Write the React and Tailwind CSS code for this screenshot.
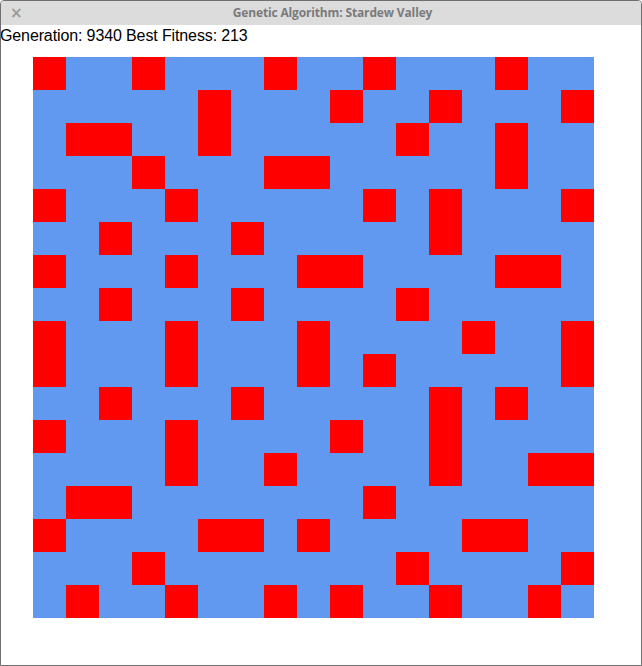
const grid = [
  [0, 3, 7, 10, 14],
  [5, 9, 12, 16],
  [1, 2, 5, 11, 14],
  [3, 7, 8, 14],
  [0, 4, 10, 12, 16],
  [2, 6, 12],
  [0, 4, 8, 9, 14, 15],
  [2, 6, 11],
  [0, 4, 8, 13, 16],
  [0, 4, 8, 10, 16],
  [2, 6, 12, 14],
  [0, 4, 9, 12],
  [4, 7, 12, 15, 16],
  [1, 2, 10],
  [0, 5, 6, 8, 13, 14],
  [3, 11, 16],
  [1, 4, 7, 9, 12, 15],
];

export default function App() {
  return (
    <div className="w-[642px] h-[666px] bg-white flex flex-col border border-[#6f6f6f] rounded-t-[4px] overflow-hidden">
      <div className="h-[24px] shrink-0 bg-[#dcdcdc] relative flex items-center justify-center">
        <span className="absolute left-[9px] top-[5px] text-[#9a9a9a] text-[15px] font-bold leading-none" style={{ fontFamily: '"DejaVu Sans", sans-serif' }}>×</span>
        <span className="text-[12px] font-bold text-[#7a7a7a] leading-none pl-[23px] tracking-[-0.15px]" style={{ fontFamily: '"Open Sans", sans-serif' }}>
          Genetic Algorithm: Stardew Valley
        </span>
      </div>
      <div className="h-[22px] flex items-center text-[16px] text-black leading-none -ml-[1px] tracking-[-0.12px]" style={{ fontFamily: '"Liberation Sans", Arial, sans-serif' }}>
        Generation: 9340 Best Fitness: 213
      </div>
      <div className="ml-[32px] mt-[10px] grid grid-cols-[repeat(17,33px)] grid-rows-[repeat(17,33px)] w-[561px] h-[561px]">
        {grid.map((row, r) =>
          Array.from({ length: 17 }, (_, c) => (
            <div key={r + "-" + c} className={row.includes(c) ? "bg-[#ff0000]" : "bg-[#6198f0]"} />
          ))
        )}
      </div>
    </div>
  );
}
